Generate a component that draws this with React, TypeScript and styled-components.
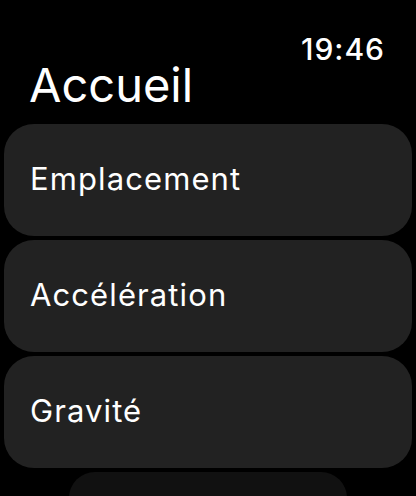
import styled, { createGlobalStyle } from "styled-components";

const GlobalStyle = createGlobalStyle`
  html, body {
    margin: 0;
    padding: 0;
    background: #000;
    overflow: hidden;
  }
  body {
    font-family: Inter, "Noto Sans", sans-serif;
    color: #fff;
  }
`;

const items = ["Emplacement", "Accélération", "Gravité"];

const App = () => {
  return (
    <Screen>
      <GlobalStyle />
      <Header>
        <Time>19:46</Time>
        <Title>Accueil</Title>
      </Header>

      <List>
        {items.map((item) => (
          <Card key={item}>
            <CardLabel>{item}</CardLabel>
          </Card>
        ))}
        <NextCard />
      </List>
    </Screen>
  );
};

const Screen = styled.div`
  width: 416px;
  height: 496px;
  background: #000;
  overflow: hidden;
  display: flex;
  flex-direction: column;
`;

const Header = styled.header`
  display: flex;
  flex-direction: column;
  flex-shrink: 0;
  padding: 32px 31px 0 29px;
  height: 124px;
  box-sizing: border-box;
`;

const Time = styled.span`
  align-self: flex-end;
  font-size: 30px;
  line-height: 34px;
  font-weight: 500;
  letter-spacing: 1px;
`;

const Title = styled.h1`
  margin: 0;
  font-size: 47px;
  line-height: 50px;
  font-weight: 400;
  margin-top: -6px;
`;

const List = styled.div`
  display: flex;
  flex-direction: column;
  align-items: center;
  gap: 4px;
`;

const Card = styled.div`
  width: 408px;
  height: 112px;
  flex-shrink: 0;
  box-sizing: border-box;
  background: #222222;
  border-radius: 30px;
  display: flex;
  align-items: center;
  padding-left: 26px;
`;

const CardLabel = styled.span`
  font-size: 31px;
  letter-spacing: 1.1px;
  margin-top: -4px;
`;

const NextCard = styled.div`
  width: 278px;
  height: 60px;
  flex-shrink: 0;
  background: #111111;
  border-radius: 26px;
`;

export default App;
